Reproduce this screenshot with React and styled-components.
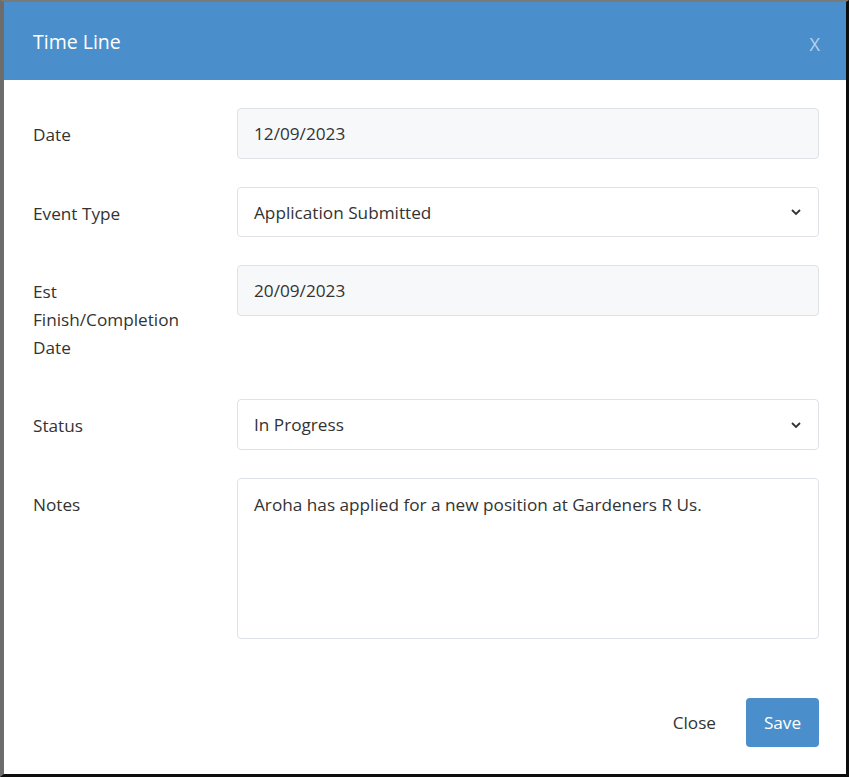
import styled, { createGlobalStyle } from "styled-components";

const GlobalStyle = createGlobalStyle`
  html, body {
    margin: 0;
    padding: 0;
    background: #ffffff;
  }
  body {
    font-family: "Open Sans", "Noto Sans", "Liberation Sans", sans-serif;
  }
  * {
    box-sizing: border-box;
  }
`;

const Modal = styled.div`
  width: 849px;
  height: 777px;
  display: flex;
  flex-direction: column;
  background: #fff;
  border-left: 4px solid #6c6c6c;
  border-top: 2px solid #7a7a7a;
  border-right: 3px solid #0d0d0d;
  border-bottom: 3px solid #0d0d0d;
`;

const Header = styled.div`
  height: 78px;
  background: #4a8fcb;
  display: flex;
  align-items: center;
  justify-content: space-between;
  padding: 0 26px 0 29px;
`;

const Title = styled.h2`
  margin: 0;
  font-size: 19.5px;
  font-weight: 400;
  color: #ffffff;
`;

const CloseX = styled.span`
  font-size: 18px;
  color: #b9d3ec;
  margin-top: 6px;
`;

const Body = styled.div`
  flex: 1;
  padding: 28px 27px 0 29px;
  display: flex;
  flex-direction: column;
  gap: 28px;
`;

const Row = styled.div`
  display: flex;
  align-items: flex-start;
`;

const Label = styled.label`
  width: 204px;
  padding: 13px 40px 9px 0;
  font-size: 17.2px;
  line-height: 28px;
  color: #333;
`;

const Field = styled.div`
  flex: 1;
  height: ${({ $tall }) => ($tall ? "161px" : "50.7px")};
  border: 1px solid #dfe2e6;
  border-radius: 4px;
  background: ${({ $muted }) => ($muted ? "#f7f8fa" : "#ffffff")};
  display: flex;
  align-items: ${({ $tall }) => ($tall ? "flex-start" : "center")};
  justify-content: space-between;
  padding: ${({ $tall }) => ($tall ? "14px 16px" : "0 16px")};
  font-size: 17.2px;
  color: #333;
`;

const Chevron = () => (
  <svg width="12" height="8" viewBox="0 0 12 8">
    <path d="M2 2 L6 6 L10 2" fill="none" stroke="#333" strokeWidth="1.8" />
  </svg>
);

const Footer = styled.div`
  display: flex;
  justify-content: flex-end;
  align-items: center;
  gap: 30px;
  padding: 0 27px 27px 29px;
`;

const TextButton = styled.button`
  border: none;
  background: none;
  font: inherit;
  font-size: 17.2px;
  color: #333;
  padding: 0;
`;

const SaveButton = styled.button`
  width: 73px;
  height: 49px;
  border: none;
  border-radius: 4px;
  background: #4a8fcb;
  color: #fff;
  font: inherit;
  font-size: 17.2px;
`;

const App = () => {
  return (
    <>
      <GlobalStyle />
      <Modal>
        <Header>
          <Title>Time Line</Title>
          <CloseX>X</CloseX>
        </Header>
        <Body>
          <Row>
            <Label>Date</Label>
            <Field $muted>12/09/2023</Field>
          </Row>
          <Row>
            <Label>Event Type</Label>
            <Field>
              Application Submitted
              <Chevron />
            </Field>
          </Row>
          <Row>
            <Label>Est Finish/Completion Date</Label>
            <Field $muted>20/09/2023</Field>
          </Row>
          <Row>
            <Label>Status</Label>
            <Field>
              In Progress
              <Chevron />
            </Field>
          </Row>
          <Row>
            <Label>Notes</Label>
            <Field $tall>Aroha has applied for a new position at Gardeners R Us.</Field>
          </Row>
        </Body>
        <Footer>
          <TextButton>Close</TextButton>
          <SaveButton>Save</SaveButton>
        </Footer>
      </Modal>
    </>
  );
};

export default App;
